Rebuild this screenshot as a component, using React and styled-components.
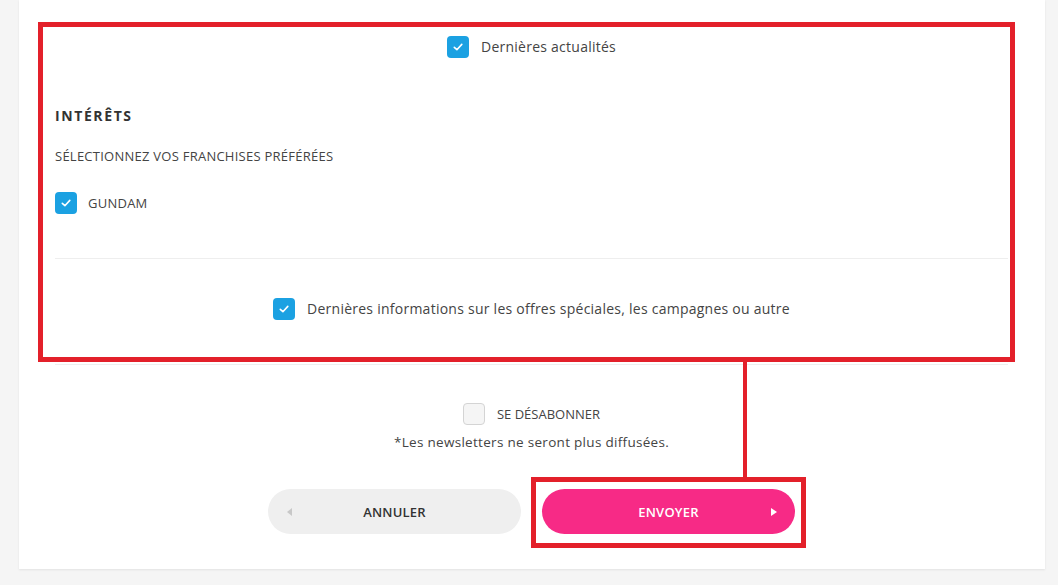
import React from "react";
import styled, { createGlobalStyle } from "styled-components";

const Global = createGlobalStyle`
  html, body { margin: 0; padding: 0; background: #f5f5f5; }
  body { font-family: "Open Sans", "Liberation Sans", sans-serif; color: #444; }
  * { box-sizing: border-box; }
`;

const Page = styled.div`
  position: relative;
  width: 1058px;
  height: 585px;
  overflow: hidden;
`;

const Card = styled.div`
  margin-left: 19px;
  width: 1026px;
  height: 569px;
  background: #fff;
  box-shadow: 0 1px 2px rgba(0, 0, 0, 0.08);
  padding: 0 37px 0 36px;
  display: flex;
  flex-direction: column;
`;

const Section = styled.div`
  border-bottom: 1px solid #eeeeee;
  display: flex;
  flex-direction: column;
  padding: ${(p) => p.$pad};
`;

const Spacer = styled.div`
  height: ${(p) => p.$h}px;
  flex: none;
`;

const CheckRow = styled.label`
  display: flex;
  align-items: center;
  gap: ${(p) => p.$gap || "12px"};
  align-self: ${(p) => (p.$center ? "center" : "flex-start")};
  font-size: ${(p) => p.$size || "14px"};
  color: #444;
  letter-spacing: ${(p) => p.$ls || "0.25px"};
  line-height: 22px;
`;

const Box = styled.span`
  width: 22px;
  height: 22px;
  border-radius: 4px;
  flex: none;
  display: flex;
  align-items: center;
  justify-content: center;
  background: ${(p) => (p.$checked ? "#1ba1e2" : "#f5f5f5")};
  border: ${(p) => (p.$checked ? "none" : "1px solid #d4d4d4")};
`;

const Heading = styled.h3`
  margin: 0;
  font-size: 14px;
  font-weight: 700;
  letter-spacing: 1.6px;
  color: #333;
  line-height: 20px;
`;

const SubHeading = styled.div`
  margin-top: 20px;
  font-size: 13px;
  letter-spacing: 0.25px;
  color: #444;
  line-height: 20px;
`;

const Unsub = styled.div`
  display: flex;
  flex-direction: column;
  align-items: center;
  padding-top: 38px;
`;

const Note = styled.p`
  margin: 7px 0 0;
  font-size: 13.5px;
  letter-spacing: 0.3px;
  color: #444;
  line-height: 20px;
`;

const Buttons = styled.div`
  display: flex;
  justify-content: center;
  gap: 21px;
  margin-top: 37px;
`;

const Button = styled.button`
  position: relative;
  width: 253px;
  height: 45px;
  border: none;
  border-radius: 23px;
  background: ${(p) => (p.$primary ? "#f72a86" : "#efefef")};
  color: ${(p) => (p.$primary ? "#fff" : "#333")};
  font-family: "Open Sans", "Liberation Sans", sans-serif;
  font-size: 13px;
  font-weight: 600;
  letter-spacing: 0.2px;
  display: flex;
  align-items: center;
  justify-content: center;
  cursor: pointer;
`;

const Arrow = styled.span`
  position: absolute;
  top: 50%;
  ${(p) => (p.$right ? "right: 18px;" : "left: 19px;")}
  transform: translateY(-50%);
  width: 0;
  height: 0;
  border-top: 4px solid transparent;
  border-bottom: 4px solid transparent;
  ${(p) =>
    p.$right
      ? "border-left: 6px solid #fff;"
      : "border-right: 5px solid #c8c8c8;"}
`;

const Mark = styled.div`
  position: absolute;
  border: 5px solid #e3202a;
  left: ${(p) => p.$l}px;
  top: ${(p) => p.$t}px;
  width: ${(p) => p.$w}px;
  height: ${(p) => p.$h}px;
  pointer-events: none;
`;

const Connector = styled.div`
  position: absolute;
  left: 743px;
  top: 360px;
  width: 4px;
  height: 120px;
  background: #e3202a;
`;

const Check = () => (
  <svg width="12" height="12" viewBox="0 0 12 12" fill="none">
    <path d="M2.3 6.3 L4.9 8.7 L9.8 3.4" stroke="#fff" strokeWidth="1.6" strokeLinecap="round" strokeLinejoin="round" />
  </svg>
);

export default function App() {
  return (
    <Page>
      <Global />
      <Card>
        <Section $pad="36px 0 0">
          <CheckRow $center>
            <Box $checked><Check /></Box>
            Dernières actualités
          </CheckRow>
          <Spacer $h={48} />
          <Heading>INTÉRÊTS</Heading>
          <SubHeading>SÉLECTIONNEZ VOS FRANCHISES PRÉFÉRÉES</SubHeading>
          <Spacer $h={26} />
          <CheckRow $size="13px" $gap="11px">
            <Box $checked><Check /></Box>
            GUNDAM
          </CheckRow>
          <Spacer $h={44} />
        </Section>
        <Section $pad="39px 0 44px">
          <CheckRow $center>
            <Box $checked><Check /></Box>
            Dernières informations sur les offres spéciales, les campagnes ou autre
          </CheckRow>
        </Section>
        <Unsub>
          <CheckRow $center $size="13px" $ls="0">
            <Box />
            SE DÉSABONNER
          </CheckRow>
          <Note>*Les newsletters ne seront plus diffusées.</Note>
        </Unsub>
        <Buttons>
          <Button>
            <Arrow />
            ANNULER
          </Button>
          <Button $primary>
            ENVOYER
            <Arrow $right />
          </Button>
        </Buttons>
      </Card>
      <Mark $l={38} $t={22} $w={977} $h={340} />
      <Connector />
      <Mark $l={531} $t={477} $w={275} $h={71} />
    </Page>
  );
}
